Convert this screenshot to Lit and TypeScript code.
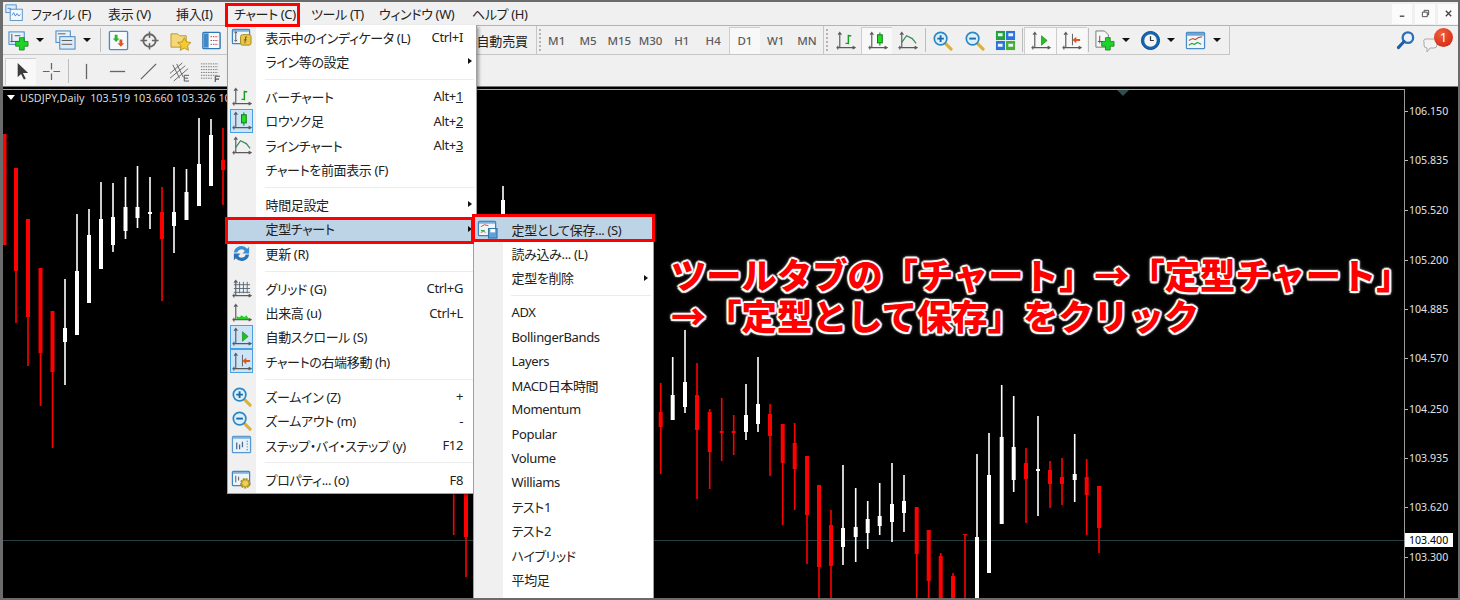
import { LitElement, html, css, svg } from 'lit'
import { customElement } from 'lit/decorators.js'
import { classMap } from 'lit/directives/class-map.js'

const AX = svg`<path d="M5 3v15M3.2 5 5 2.5 6.8 5M1.5 18.5h19M18.5 17l2.5 1.5-2.5 1.5M3 16.5v4" fill="none" stroke="#5a5a5a" stroke-width="1.2"/>`
const WIN = svg`<rect x="1.5" y="2.5" width="18" height="15" rx="1" fill="#eef6fc" stroke="#3f83c0" stroke-width="1.3"/><path d="M2 4h17" stroke="#7fb2dd" stroke-width="2"/>`
const PLUS = svg`<path d="M12 8h5v4h4v5h-4v4h-5v-4H8v-5h4z" fill="#1ed428" stroke="#0d7d18" stroke-width=".8"/>`
const lens = (inner: unknown) => svg`<path d="M14 14l6 6" stroke="#d8b23a" stroke-width="3.2" stroke-linecap="round"/><circle cx="9" cy="9" r="6.6" fill="#d9f1fb" stroke="#2b88c6" stroke-width="1.8"/>${inner}`

const icons: Record<string, unknown> = {
  app: svg`<rect x="1" y="1" width="12" height="9" fill="#dcecf8" stroke="#4a86c0"/><rect x="6" y="6" width="14" height="13" fill="#f4f9fd" stroke="#4a86c0"/><path d="M8 13l2-3 2 4 2-3 2 3 2-2" fill="none" stroke="#3a7fd0"/><path d="M3 5h3l1 2" fill="none" stroke="#3a7fd0"/>`,
  newchart: svg`<rect x="1" y="2" width="16" height="13" fill="#e6f1fa" stroke="#3f83c0"/><path d="M4 4v9M2.5 12h12M7 6h6" stroke="#555" fill="none"/>${PLUS}`,
  profile: svg`<rect x="1" y="1" width="15" height="12" fill="#e6f1fa" stroke="#3f83c0"/><rect x="5" y="7" width="16" height="13" fill="#dceaf7" stroke="#3f83c0"/><path d="M3 4h8M7 11h11M7 15h11" stroke="#5a5a5a"/>`,
  market: svg`<rect x="1.5" y="1.5" width="19" height="19" rx="1" fill="#f6fafd" stroke="#4b8cc6" stroke-width="1.4"/><path d="M7 5h3v4h2l-3.500 3.500L5 9h2z" fill="#2db52d"/><path d="M12 16h3v-4h2l-3.500-3.500L10 12h2z" transform="rotate(180 13.500 13)" fill="#e0561d"/>`,
  cross: svg`<circle cx="11" cy="11" r="6.500" fill="none" stroke="#666" stroke-width="2"/><path d="M11 1.500v7M11 13.500v7M1.500 11h7M13.500 11h7" stroke="#666" stroke-width="1.600"/>`,
  folder: svg`<path d="M1 4h7l2 2h7v12H1z" fill="#f3d779" stroke="#b9992f"/><path d="M15 8l2.200 4.400 4.800.7-3.500 3.400.8 4.800-4.300-2.300-4.300 2.300.8-4.800L8 13.100l4.800-.7z" fill="#f5c92f" stroke="#a88a1e" stroke-width=".8"/>`,
  navigator: svg`<rect x="2" y="2.500" width="18" height="17" rx="1" fill="#f7fbfe" stroke="#2e77b5" stroke-width="1.500"/><rect x="3" y="3.500" width="5" height="15" fill="#3f89c9"/><path d="M10 7h8M10 11h8M10 15h8" stroke="#c0392b" stroke-dasharray="1.500 1"/>`,
  indicator: svg`${WIN}<path d="M5 5v10M3.500 6.500 5 5l1.500 1.500M3.500 13.500 5 15l1.500-1.500" fill="none" stroke="#555"/><rect x="10" y="8" width="11" height="11" rx="2" fill="#e8c54a" stroke="#a98d21"/><path d="M15 10.500c1-.5 2 0 1.500.5M15.500 10.500 14.500 17M13.500 13.500h3" stroke="#6d5a10" fill="none"/>`,
  bar: svg`${AX}<path d="M14 5v10M14 6h3M11 14h3" fill="none" stroke="#13a01f" stroke-width="1.500"/>`,
  candle: svg`${AX}<path d="M13.500 2.500v14" stroke="#0c7a16"/><rect x="11" y="5" width="5" height="8.500" fill="#20dd20" stroke="#0c7a16"/>`,
  line: svg`${AX}<path d="M5 13 10 6l6 3 4 5" fill="none" stroke="#3a8a5a" stroke-width="1.300"/>`,
  refresh: svg`<path d="M3 10a8 8 0 0 1 14-4l2-2v7h-7l2.500-2.500A4.500 4.500 0 0 0 6.500 10z" fill="#3c8fd0"/><path d="M19 12a8 8 0 0 1-14 4l-2 2v-7h7l-2.500 2.500A4.500 4.500 0 0 0 15.500 12z" fill="#2a74b5"/>`,
  grid: svg`${AX}<path d="M9 4v12M13 4v12M17 4v12M3 7h17M3 11h17M3 15h17" stroke="#5a6a7a" fill="none"/>`,
  volume: svg`${AX}<path d="M6 18v-3l3 1 2-2 3 2 2-2 3 4z" fill="#25d025"/>`,
  autoscroll: svg`${AX}<path d="M12 6l6 5-6 5z" fill="#20c020" stroke="#0c7a16" stroke-width=".6"/>`,
  shift: svg`${AX}<path d="M12 4v12" stroke="#5a5a5a"/><path d="M20 9.500h-4V7l-4 3.500 4 3.500v-2.500h4z" fill="#e2541a"/>`,
  zoomin: lens(svg`<path d="M9 5.500v7M5.500 9h7" stroke="#2468a8" stroke-width="2"/>`),
  zoomout: lens(svg`<path d="M5.500 9h7" stroke="#2468a8" stroke-width="2"/>`),
  step: svg`<rect x="1.500" y="2.500" width="19" height="17" rx="1" fill="#e8f2fb" stroke="#5b97cc" stroke-width="1.300"/><path d="M2 4h18" stroke="#7fb2dd" stroke-width="2"/><path d="M6 9v7M9 11v5M12 8v6M17 7v1M17 10v1M17 13v1M17 16v1" stroke="#4a6a8a" stroke-width="1.300"/>`,
  properties: svg`${WIN}<path d="M5 7v7M8 8v4" stroke="#555"/><circle cx="15" cy="15" r="4.500" fill="#e9c443" stroke="#a98d21" stroke-width="2" stroke-dasharray="2 1"/><circle cx="15" cy="15" r="3.500" fill="#edcf5e" stroke="#a98d21" stroke-width=".7"/>`,
  template: svg`${WIN}<path d="M4 8l4-2 4 1M4 14l3-1 2 1" fill="none" stroke="#d8432b"/><path d="M4 12h4" stroke="#22a82e"/><rect x="12" y="10" width="9" height="10" fill="#5ea1d8" stroke="#2e6ea6"/><rect x="14" y="10.500" width="5" height="3.500" fill="#fff"/>`,
  tile: svg`<rect x="1" y="1" width="9.500" height="9.500" fill="#22a03a"/><rect x="11.500" y="1" width="9.500" height="9.500" fill="#2f73d8"/><rect x="1" y="11.500" width="9.500" height="9.500" fill="#2f73d8"/><rect x="11.500" y="11.500" width="9.500" height="9.500" fill="#46b02f"/><path d="M3 5h5M14 5h5M3 16h5M14 16h5" stroke="#e8f4ff" stroke-width="3"/>`,
  addind: svg`<path d="M2 1h9l4 4v13H2z" fill="#f7f7f7" stroke="#777"/><path d="M6 6v8M4 12h5" stroke="#555"/>${PLUS}`,
  clock: svg`<circle cx="11" cy="11" r="9.500" fill="#1565b4" stroke="#0c4c8c"/><circle cx="11" cy="11" r="6.500" fill="#f3f6f2"/><path d="M11 6.500V11h3.500" fill="none" stroke="#333" stroke-width="1.300"/>`,
  tmpl: svg`<rect x="1.500" y="2.500" width="19" height="17" rx="1" fill="#f0f6fb" stroke="#4b8cc6" stroke-width="1.300"/><path d="M2 4.500h18" stroke="#6ea5d5" stroke-width="3"/><path d="M4 11l4-2 3 1 3-2 4-1" fill="none" stroke="#c9542d" stroke-width="1.200"/><path d="M4 16l3-2 3 1 3-2 4 2" fill="none" stroke="#29a83a" stroke-width="1.200"/>`,
  arrow: svg`<path d="M7 2v15l3.500-3.500 3 6 2-1-3-5.800H18z" fill="#3c3c3c"/>`,
  crosshair: svg`<path d="M11 2v7M11 13v7M2 11h7M13 11h7" stroke="#666" stroke-width="1.300"/>`,
  vline: svg`<path d="M11 3v16" stroke="#666" stroke-width="1.400"/>`,
  hline: svg`<path d="M3 11h16" stroke="#666" stroke-width="1.400"/>`,
  trend: svg`<path d="M3 19 19 3" stroke="#666" stroke-width="1.400"/>`,
  channel: svg`<path d="M1 13 14 2M1 18 17 5M5 21 20 8M4 4l7 14M8 3l7 14" stroke="#666" fill="none"/><path d="M16 15h5M16 15v6h5M16 18h4" stroke="#555" fill="none"/>`,
  fibo: svg`<path d="M1 3h18M1 6h18M1 9h18M1 12h18M1 15h18M1 18h12" stroke="#777" stroke-dasharray="1.500 1"/><path d="M16 16h5M16 16v6M16 19h4" stroke="#555" fill="none" stroke-width="1.200"/>`,
  search: svg`<circle cx="13.500" cy="8" r="5.500" fill="#e7f2fb" stroke="#2c6fb5" stroke-width="2.400"/><path d="M9.500 12 3.500 18.500" stroke="#1f5fa8" stroke-width="3.200" stroke-linecap="round"/>`,
}

const icon = (name: string) => html`<svg class="ic" viewBox="0 0 22 22">${icons[name]}</svg>`

type Row = { t?: string, k?: unknown, i?: string, on?: boolean, sub?: boolean, hi?: boolean, sep?: boolean }

const chartMenu: Row[] = [
  { t: '表示中のインディケータ (L)', k: 'Ctrl+I', i: 'indicator' },
  { t: 'ライン等の設定', sub: true },
  { sep: true },
  { t: 'バーチャート', k: html`Alt+<u>1</u>`, i: 'bar' },
  { t: 'ロウソク足', k: html`Alt+<u>2</u>`, i: 'candle', on: true },
  { t: 'ラインチャート', k: html`Alt+<u>3</u>`, i: 'line' },
  { t: 'チャートを前面表示 (F)' },
  { sep: true },
  { t: '時間足設定', sub: true },
  { t: '定型チャート', sub: true, hi: true },
  { t: '更新 (R)', i: 'refresh' },
  { sep: true },
  { t: 'グリッド (G)', k: 'Ctrl+G', i: 'grid' },
  { t: '出来高 (u)', k: 'Ctrl+L', i: 'volume' },
  { t: '自動スクロール (S)', i: 'autoscroll', on: true },
  { t: 'チャートの右端移動 (h)', i: 'shift', on: true },
  { sep: true },
  { t: 'ズームイン (Z)', k: '+', i: 'zoomin' },
  { t: 'ズームアウト (m)', k: '-', i: 'zoomout' },
  { t: 'ステップ・バイ・ステップ (y)', k: 'F12', i: 'step' },
  { sep: true },
  { t: 'プロパティ... (o)', k: 'F8', i: 'properties' },
]

const subMenu: Row[] = [
  { t: '定型として保存... (S)', i: 'template', hi: true },
  { t: '読み込み... (L)' },
  { t: '定型を削除', sub: true },
  { sep: true },
  ...['ADX', 'BollingerBands', 'Layers', 'MACD日本時間', 'Momentum', 'Popular', 'Volume', 'Williams', 'テスト1', 'テスト2', 'ハイブリッド', '平均足'].map(t => ({ t })),
]

const W = '#fff'
const R = '#f00'
// x, wick top, wick bottom, body top, body bottom, colour
const candles: [number, number, number, number, number, string][] = [
  [4.5, 134, 245, 134, 245, R], [16, 168, 323, 168, 271, R], [28, 219, 366, 219, 317, R],
  [40.5, 268, 406, 268, 353, R], [52.5, 311, 448, 311, 372, R], [65, 279, 385, 328, 342, W],
  [77, 214, 335, 271, 335, W], [89, 209, 303, 235, 303, W], [101, 182, 269, 219, 269, W],
  [113, 183, 252, 217, 245, W], [125.5, 177, 239, 207, 231, W], [137.5, 166, 228, 207, 218, W],
  [150, 177, 229, 212, 214, W], [162, 187, 301, 212, 239, R], [174, 167, 253, 212, 226, W],
  [186.5, 169, 220, 192, 220, W], [199, 118, 206, 164, 206, W], [211, 119, 186, 135, 186, W],
  [223, 128, 205, 160, 170, R], [453.7, 440, 535, 440, 480, R], [466, 480, 577, 480, 537, R],
  [503, 186, 230, 200, 230, W],
  [660.7, 383, 474, 412, 427, R], [672.7, 357, 420, 395, 420, W], [685, 330, 413, 382, 407, W],
  [697, 363, 499, 395, 430, R], [709.7, 409, 489, 412, 452, R], [721.7, 398, 461, 431, 433, R],
  [733.7, 415, 455, 431, 433, R], [746, 384, 440, 415, 432, W], [758, 357, 432, 404, 424, W],
  [770, 404, 476, 414, 436, R], [782.7, 424, 525, 424, 463, R], [794.7, 423, 510, 443, 469, R],
  [807, 456, 564, 456, 515, R], [819, 485, 600, 485, 567, R], [831, 510, 600, 525, 566, R],
  [843, 465, 565, 528, 547, W], [855.7, 488, 562, 527, 537, W], [867.7, 501, 549, 519, 533, W],
  [879.7, 483, 535, 516, 526, W], [892, 463, 542, 504, 522, W], [904, 475, 532, 501, 513, W],
  [916.7, 507, 600, 507, 554, R], [928.7, 530, 600, 530, 581, R], [940.7, 553, 600, 556, 600, R],
  [953, 573, 600, 576, 600, R], [965, 534, 600, 534, 535, R], [977, 454, 600, 537, 600, W],
  [989, 433, 573, 475, 573, W], [1001.7, 385, 524, 437, 524, W], [1013.7, 396, 492, 447, 480, W],
  [1026, 448, 523, 463, 479, R], [1038, 416, 516, 469, 471, W], [1050, 461, 508, 470, 484, R],
  [1062, 458, 505, 477, 484, R], [1074.7, 434, 502, 474, 480, W], [1086.7, 459, 535, 477, 495, R],
  [1099, 486, 553, 486, 528, R],
]

const prices = ['106.150', '105.835', '105.520', '105.200', '104.885', '104.570', '104.250', '103.935', '103.620', '103.300']
const priceY = (p: string) => 111 + (106.15 - parseFloat(p)) * 156.6

const menuBar = ['ファイル (F)', '表示 (V)', '挿入(I)', 'チャート (C)', 'ツール (T)', 'ウィンドウ (W)', 'ヘルプ (H)']
const frames = ['M1', 'M5', 'M15', 'M30', 'H1', 'H4', 'D1', 'W1', 'MN']

@customElement('app-root')
export class AppRoot extends LitElement {
  static styles = css`
    * { box-sizing: border-box; }

    :host {
      display: block;
      width: 1460px;
      height: 600px;
      font-family: "Noto Sans", "Noto Sans CJK JP", sans-serif;
      font-feature-settings: "palt";
      color: #222;
    }

    .frame {
      position: relative;
      display: flex;
      flex-direction: column;
      width: 100%;
      height: 100%;
      overflow: hidden;
      background: #f0f0f0;
      border: solid #6b6b6b;
      border-width: 2px 2px 2px 3px;
    }

    .menubar {
      display: flex;
      align-items: center;
      height: 24px;
      flex: none;
      font-size: 13px;
      letter-spacing: -.35px;
      border-bottom: 1px solid #b4b4b4;
    }

    .app-icon { width: 19px; height: 19px; margin: 0 7px 0 2px; flex: none; }
    .app-icon .ic { width: 19px; height: 19px; }
    .mb { display: flex; }
    .mb span { white-space: nowrap; }
    .m0 { width: 77px; } .m1 { width: 68px; } .m2 { width: 58px; } .m3 { width: 77px; }
    .m4 { width: 68px; } .m5 { width: 93px; } .m6 { width: 74px; }

    .win { margin-left: auto; display: flex; gap: 3px; }
    .win div {
      display: flex;
      align-items: center;
      justify-content: center;
      width: 20px;
      height: 20px;
      background: #fbfbfb;
    }
    .win svg { width: 9px; height: 9px; }

    .tools1 { display: flex; height: 30px; flex: none; position: relative; }
    .tools2 { display: flex; height: 30px; flex: none; align-items: center; padding-left: 2px; }

    .group {
      display: flex;
      align-items: center;
      height: 29px;
      border-bottom: 1px solid #c6c6c6;
      border-right: 1px solid #c6c6c6;
      flex: none;
    }
    .g1 { width: 534px; padding-left: 4px; }
    .g2 { width: 287px; }
    .g3 { width: 406px; }

    .grip {
      width: 2px;
      height: 22px;
      flex: none;
      margin: 0 1.700px 0 2px;
      border-left: 2px dotted #b5b5b5;
    }
    .g2 .grip { margin-right: 0; }

    .btn {
      display: flex;
      align-items: center;
      justify-content: center;
      width: 31px;
      height: 27px;
      flex: none;
    }
    .tf .btn, .g3 > .btn { width: 31.300px; }
    .btn.on {
      background: #f8f8f8;
      border: solid #cdcdcd;
      border-width: 1px 0 0 1px;
    }
    .tf {
      display: flex;
      color: #5c5c5c;
      font: 11.500px "Noto Sans", sans-serif;
      font-weight: 500;
    }

    .ic { width: 21px; height: 21px; display: block; flex: none; }

    .combo { display: flex; align-items: center; flex: none; }
    .combo .slot { width: 22px; display: flex; justify-content: center; }
    .combo .drop { width: 22px; display: flex; justify-content: center; }
    .c-a { width: 47px; }
    .c-b { width: 45px; }
    .c-c { width: 45.500px; }
    .c-c .slot { width: 28px; }
    .c-c .drop { width: 14px; }

    .caret {
      width: 0;
      height: 0;
      border: solid transparent;
      border-width: 4px 4px 0;
      border-top-color: #111;
    }

    .sep { width: 1px; height: 24px; background: #bdbdbd; flex: none; margin: 0 1.500px 0 1px; }
    .auto { margin-left: auto; padding-right: 8px; font-size: 13px; letter-spacing: -.1px; white-space: nowrap; }

    .right {
      position: absolute;
      top: 0;
      right: 0;
      height: 29px;
      display: flex;
      align-items: center;
      gap: 7px;
      padding-right: 5px;
    }
    .chat { position: relative; width: 30px; height: 26px; }
    .bubble { position: absolute; left: 0; top: 10px; }
    .badge {
      position: absolute;
      top: 0;
      right: 0;
      width: 19px;
      height: 19px;
      border-radius: 50%;
      background: radial-gradient(circle at 40% 30%, #f0603a, #cf1d10);
      color: #fff;
      font-size: 13px;
      line-height: 19px;
      text-align: center;
    }

    .chart {
      flex: 1;
      display: flex;
      background: #000;
      border-top: 1px solid #777;
      min-height: 0;
    }
    .plot { position: relative; width: 1401px; flex: none; }
    .plot svg { display: block; width: 1401px; height: 511px; }

    .head {
      position: absolute;
      top: 3px;
      left: 4px;
      display: flex;
      align-items: center;
      gap: 5px;
      color: #d8d8d8;
      font-size: 10.800px;
      white-space: pre;
    }
    .head i {
      width: 0;
      height: 0;
      border: solid transparent;
      border-width: 5px 4px 0;
      border-top-color: #fff;
    }

    .axis { position: relative; flex: 1; border-left: 1px solid #9a9a9a; color: #e0e0e0; font-size: 10.600px; margin-top: 2px; }
    .price { position: absolute; left: 4px; line-height: 14px; margin-top: -7px; }
    .price::before {
      content: '';
      position: absolute;
      left: -4px;
      top: 7px;
      width: 3px;
      height: 1px;
      background: #bbb;
    }
    .now {
      position: absolute;
      left: 0;
      width: 48px;
      height: 14px;
      margin-top: -7px;
      padding-left: 4px;
      background: #fff;
      color: #000;
      line-height: 14px;
    }

    .menu {
      position: absolute;
      display: flex;
      flex-direction: column;
      background: #fff;
      font-size: 13px;
      letter-spacing: -.35px;
      padding: 1px 0;
      box-shadow: 2px 2px 3px rgba(0, 0, 0, .35);
      border: 1px solid #a0a0a0;
      border-top: none;
    }
    .menu::before {
      content: '';
      position: absolute;
      top: 0;
      bottom: 0;
      left: 0;
      width: 28px;
      background: #f0f0f0;
    }
    .main { left: 224px; top: 23px; width: 250px; height: 469px; padding-top: 0; }
    .main .rule { height: 10.500px; }
    .sub { left: 470px; top: 213px; width: 181px; height: 400px; z-index: 1; border-top: 1px solid #a0a0a0; border-left: 1px solid #a0a0a0; box-shadow: none; }
    .sub::before { width: 29px; }
    .sub .row { height: 24.300px; }

    .row {
      position: relative;
      display: flex;
      align-items: center;
      height: 24.400px;
      flex: none;
      padding-left: 37.500px;
      padding-right: 13px;
      white-space: nowrap;
    }
    .row.hi { background: #bdd3e6; }
    .row .key { margin-left: auto; }
    .row .tri {
      position: absolute;
      right: 4px;
      top: 9px;
      width: 0;
      height: 0;
      border: solid transparent;
      border-width: 3.500px 0 3.500px 4px;
      border-left-color: #111;
    }
    .sub .row .tri { right: 5px; }

    .cell {
      position: absolute;
      left: 2px;
      top: 0;
      width: 23px;
      height: 24px;
      display: flex;
      align-items: center;
      justify-content: center;
    }
    .cell.on { background: #cde4f7; border: 1px solid #4a9fe0; }
    .sub .cell { left: 2px; }

    .rule { height: 10.200px; flex: none; position: relative; }
    .rule::after {
      content: '';
      position: absolute;
      left: 37px;
      right: 2px;
      top: 5px;
      height: 1px;
      background: #ececec;
    }

    .mark { position: absolute; border: 3px solid #f00; z-index: 2; pointer-events: none; }
    .mark-top { left: 222px; top: 1px; width: 75px; height: 24px; }
    .mark-row { left: 222px; top: 215px; width: 249px; height: 27px; }
    .mark-sub { left: 469px; top: 212px; width: 183px; height: 28px; }

    .note {
      position: absolute;
      left: 668px;
      top: 251px;
      z-index: 3;
      color: #f00;
      font: 900 35.300px/41px "Noto Sans CJK JP", sans-serif;
      font-feature-settings: normal;
      white-space: nowrap;
      text-shadow:
        2px 0 1px #fff, -2px 0 1px #fff, 0 2px 1px #fff, 0 -2px 1px #fff,
        1.500px 1.500px 1px #fff, -1.500px 1.500px 1px #fff, 1.500px -1.500px 1px #fff, -1.500px -1.500px 1px #fff,
        0 0 5px #bbb;
    }
  `

  renderRow (r: Row) {
    if (r.sep) return html`<div class="rule"></div>`
    return html`
      <div class=${classMap({ row: true, hi: !!r.hi })}>
        ${r.i ? html`<div class=${classMap({ cell: true, on: !!r.on })}>${icon(r.i)}</div>` : ''}
        <span>${r.t}</span>
        ${r.k ? html`<span class="key">${r.k}</span>` : ''}
        ${r.sub ? html`<i class="tri"></i>` : ''}
      </div>
    `
  }

  renderChart () {
    return html`
      <svg viewBox="3 87 1401 511">
        <path d="M3 89.500h1401" stroke="#a8a8a8"/>
        <path d="M1117 90h12l-6 6z" fill="#2f4f4f"/>
        <path d="M3 540.500h1401" stroke="#264040"/>
        ${candles.map(([x, wt, wb, bt, bb, c]) => svg`
          <rect x=${x - 0.8} y=${wt} width="1.600" height=${wb - wt} fill=${c}/>
          <rect x=${x - 2} y=${bt} width="4" height=${bb - bt} fill=${c}/>
        `)}
      </svg>
    `
  }

  render () {
    return html`
      <div class="frame">
        <div class="menubar">
          <div class="app-icon">${icon('app')}</div>
          <div class="mb">${menuBar.map((m, i) => html`<span class="m${i}">${m}</span>`)}</div>
          <div class="win">
            <div><svg viewBox="0 0 10 10"><path d="M2 8h5" stroke="#444" stroke-width="1.500"/></svg></div>
            <div><svg viewBox="0 0 10 10"><path d="M1.500 3.500h5.500v5H1.500zM3.500 3.500v-2h5v5H7" fill="none" stroke="#444"/></svg></div>
            <div><svg viewBox="0 0 10 10"><path d="M2 2l6 6M8 2 2 8" stroke="#444" stroke-width="1.500"/></svg></div>
          </div>
        </div>

        <div class="tools1">
          <div class="group g1">
            <div class="combo c-a"><div class="slot">${icon('newchart')}</div><div class="drop"><i class="caret"></i></div></div>
            <div class="combo c-b"><div class="slot">${icon('profile')}</div><div class="drop"><i class="caret"></i></div></div>
            <div class="sep"></div>
            <div class="btn">${icon('market')}</div>
            <div class="btn">${icon('cross')}</div>
            <div class="btn">${icon('folder')}</div>
            <div class="btn">${icon('navigator')}</div>
            <div class="auto">自動売買</div>
          </div>
          <div class="group g2">
            <div class="grip"></div>
            <div class="tf">
              ${frames.map(f => html`<div class=${classMap({ btn: true, on: f === 'D1' })}>${f}</div>`)}
            </div>
          </div>
          <div class="group g3">
            <div class="grip"></div>
            <div class="btn">${icon('bar')}</div>
            <div class="btn on">${icon('candle')}</div>
            <div class="btn">${icon('line')}</div>
            <div class="sep"></div>
            <div class="btn">${icon('zoomin')}</div>
            <div class="btn">${icon('zoomout')}</div>
            <div class="btn">${icon('tile')}</div>
            <div class="sep"></div>
            <div class="btn on">${icon('autoscroll')}</div>
            <div class="btn on">${icon('shift')}</div>
            <div class="sep"></div>
            <div class="combo c-c"><div class="slot">${icon('addind')}</div><div class="drop"><i class="caret"></i></div></div>
            <div class="combo c-c"><div class="slot">${icon('clock')}</div><div class="drop"><i class="caret"></i></div></div>
            <div class="combo c-c"><div class="slot">${icon('tmpl')}</div><div class="drop"><i class="caret"></i></div></div>
          </div>
          <div class="right">
            ${icon('search')}
            <div class="chat">
              <svg class="bubble" width="20" height="16" viewBox="0 0 20 16"><path d="M3 1h8a3 3 0 0 1 3 3v3a3 3 0 0 1-3 3H7l-3 4v-4a3 3 0 0 1-3-3V4a2 2 0 0 1 2-3z" fill="#f2f2f2" stroke="#aaa"/></svg>
              <div class="badge">1</div>
            </div>
          </div>
        </div>

        <div class="tools2">
          <div class="btn on">${icon('arrow')}</div>
          <div class="btn">${icon('crosshair')}</div>
          <div class="sep"></div>
          <div class="btn">${icon('vline')}</div>
          <div class="btn">${icon('hline')}</div>
          <div class="btn">${icon('trend')}</div>
          <div class="btn">${icon('channel')}</div>
          <div class="btn">${icon('fibo')}</div>
        </div>

        <div class="chart">
          <div class="plot">
            ${this.renderChart()}
            <div class="head"><i></i><span>USDJPY,Daily  103.519 103.660 103.326 103.400</span></div>
          </div>
          <div class="axis">
            ${prices.map(p => html`<div class="price" style="top:${priceY(p) - 89}px">${p}</div>`)}
            <div class="now" style="top:${540 - 89}px">103.400</div>
          </div>
        </div>

        <div class="menu main">${chartMenu.map(r => this.renderRow(r))}</div>
        <div class="menu sub">${subMenu.map(r => this.renderRow(r))}</div>

        <div class="mark mark-top"></div>
        <div class="mark mark-row"></div>
        <div class="mark mark-sub"></div>

        <div class="note">ツールタブの「チャート」→「定型チャート」<br>→「定型として保存」をクリック</div>
      </div>
    `
  }
}
